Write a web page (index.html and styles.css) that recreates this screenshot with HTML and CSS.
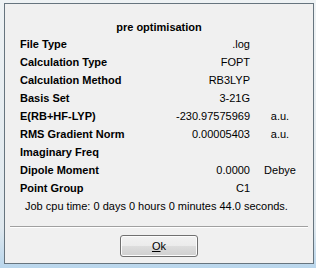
FILE: index.html
```html
<!DOCTYPE html>
<html lang="en">
  <head>
    <meta charset="utf-8" />
    <title>pre optimisation</title>
    <link rel="stylesheet" href="styles.css">
  </head>
  <body>
    <div class="dialog">
      <div class="title">pre optimisation</div>

      <div class="results">
        <div class="label">File Type</div>
        <div class="value">.log</div>
        <div class="unit"></div>

        <div class="label">Calculation Type</div>
        <div class="value">FOPT</div>
        <div class="unit"></div>

        <div class="label">Calculation Method</div>
        <div class="value">RB3LYP</div>
        <div class="unit"></div>

        <div class="label">Basis Set</div>
        <div class="value">3-21G</div>
        <div class="unit"></div>

        <div class="label">E(RB+HF-LYP)</div>
        <div class="value">-230.97575969</div>
        <div class="unit">a.u.</div>

        <div class="label">RMS Gradient Norm</div>
        <div class="value">0.00005403</div>
        <div class="unit">a.u.</div>

        <div class="label">Imaginary Freq</div>
        <div class="value"></div>
        <div class="unit"></div>

        <div class="label">Dipole Moment</div>
        <div class="value">0.0000</div>
        <div class="unit">Debye</div>

        <div class="label">Point Group</div>
        <div class="value">C1</div>
        <div class="unit"></div>
      </div>

      <div class="cpu-time">Job cpu time: 0 days 0 hours 0 minutes 44.0 seconds.</div>

      <div class="separator"></div>

      <div class="actions">
        <button class="ok-button"><u>O</u>k</button>
      </div>
    </div>
  </body>
</html>
```

FILE: styles.css
```css
html,
body {
  margin: 0;
  height: 100%;
}

body {
  background: linear-gradient(to bottom, #eef2f4 0%, #dfe8ee 85%, #b9d6ec 100%);
  font-family: "Liberation Sans", Arial, sans-serif;
  font-size: 11px;
  color: #000;
  padding: 3px 2px 0 4px;
  box-sizing: border-box;
}

.dialog {
  width: 310px;
  height: 261px;
  box-sizing: border-box;
  border: 1px solid #66747e;
  background-color: #f0f0f0;
  display: flex;
  flex-direction: column;
  padding: 16px 5px 0 5px;
}

.title {
  font-weight: bold;
  text-align: center;
  line-height: 15px;
  height: 15px;
}

.results {
  display: grid;
  grid-template-columns: 150px 80px 14px 32px;
  grid-auto-rows: 18px;
  line-height: 18px;
  padding-left: 10px;
}

.results .label {
  font-weight: bold;
  white-space: nowrap;
}

.results .value {
  text-align: right;
}

.results .unit {
  grid-column: 4;
  text-align: center;
  white-space: nowrap;
}

.cpu-time {
  line-height: 18px;
  padding-left: 15px;
  white-space: pre;
}

.separator {
  margin-top: 11px;
  height: 0;
  border-top: 1px solid #a0a0a0;
  border-bottom: 1px solid #ffffff;
}

.actions {
  display: flex;
  justify-content: center;
  padding-top: 7px;
}

.ok-button {
  width: 78px;
  height: 22px;
  box-sizing: border-box;
  border: 1px solid #707070;
  border-radius: 3px;
  background: linear-gradient(to bottom, #f2f2f2 0%, #ebebeb 50%, #dddddd 51%, #cfcfcf 100%);
  box-shadow: inset 0 0 0 1px #fcfcfc;
  font-family: "Liberation Sans", Arial, sans-serif;
  font-size: 11px;
  color: #000;
  padding: 0;
}
```
